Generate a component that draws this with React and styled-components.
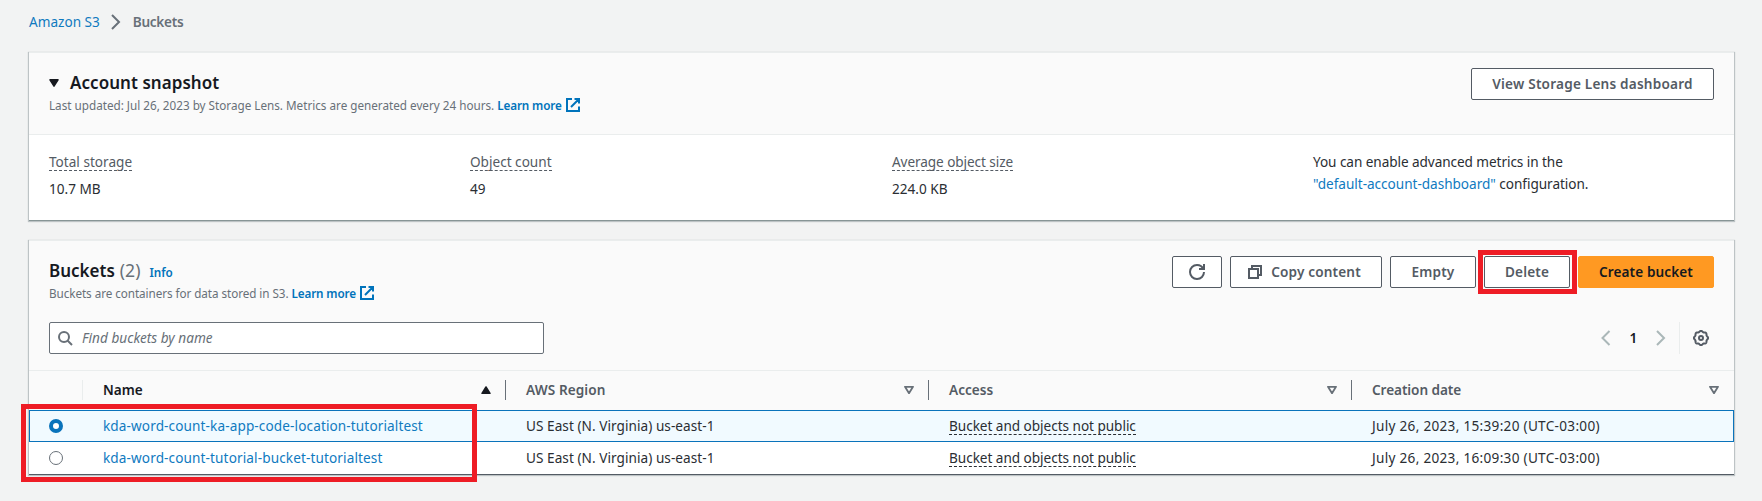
import React from 'react';
import styled, { createGlobalStyle, css } from 'styled-components';

const colors = {
  page: '#f2f3f3',
  header: '#fafafa',
  line: '#eaeded',
  text: '#16191f',
  body: '#2a2e33',
  muted: '#545b64',
  faint: '#687078',
  link: '#0073bb',
  linkLight: '#107abf',
  blue: '#0a73bb',
  mark: '#ee1c25',
};

const GlobalStyle = createGlobalStyle`
  *, *::before, *::after { box-sizing: border-box; }
  body {
    margin: 0;
    background: ${colors.page};
    color: ${colors.body};
    font: 13.6px/22px 'Noto Sans', 'Open Sans', sans-serif;
  }
`;

const Page = styled.div`
  min-height: 501px;
  padding: 11px 28px 0 29px;
`;

const Breadcrumbs = styled.nav`
  display: flex;
  align-items: center;
  height: 22px;
  margin-bottom: 19px;
  svg { margin: 0 9px 0 8px; }
`;

const Text = styled.span`
  white-space: nowrap;
  letter-spacing: ${(p) => p.$ls || 0}px;
  ${(p) => p.$color && css`color: ${p.$color};`}
  ${(p) => p.$bold && css`font-weight: 600;`}
`;

const Link = styled(Text).attrs({ as: 'a' })`
  color: ${(p) => (p.$bold ? colors.link : colors.linkLight)};
  text-decoration: none;
  cursor: pointer;
`;

const Panel = styled.section`
  width: 1705px;
  border-top: 1px solid ${colors.line};
  background: #fff;
  box-shadow: 0 1px 0 0 ${(p) => p.$edge}, 0 1px 1px 1px rgba(0, 28, 36, 0.22);
  & + & { margin-top: 20px; }
`;

const PanelHeader = styled.header`
  display: flex;
  justify-content: space-between;
  height: ${(p) => p.$height}px;
  padding: 15px 20px 0;
  background: ${colors.header};
`;

const Heading = styled.div`
  padding-top: 4px;
`;

const Title = styled.h2`
  display: flex;
  align-items: baseline;
  height: 22px;
  margin: 0 0 2px;
  font-size: 17px;
  font-weight: 600;
  line-height: 22px;
  color: ${colors.text};
`;

const Count = styled(Text)`
  margin-left: 5px;
  font-size: 17.6px;
  font-weight: 400;
  line-height: 20px;
  color: ${colors.faint};
`;

const InfoLink = styled(Link)`
  margin-left: 9px;
  font-size: 11.7px;
  line-height: 18px;
`;

const Description = styled.p`
  display: flex;
  align-items: center;
  margin: 0;
  height: 18px;
  font-size: 11.7px;
  line-height: 18px;
  color: ${colors.faint};
  a { margin-left: 3px; }
  svg { margin-left: 3px; }
`;

const Actions = styled.div`
  display: flex;
  align-items: flex-start;
  gap: 8px;
`;

const Button = styled.button`
  display: flex;
  align-items: center;
  justify-content: center;
  gap: 8px;
  width: ${(p) => p.$width}px;
  height: 32px;
  padding: 0 ${(p) => (p.$withIcon ? 4 : 0)}px 0 0;
  border: 1px solid ${(p) => (p.$primary ? '#ff9922' : colors.muted)};
  border-radius: 2px;
  background: ${(p) => (p.$primary ? '#ff9922' : '#fff')};
  color: ${(p) => (p.$primary ? colors.text : colors.muted)};
  font: 600 13.6px/22px 'Noto Sans', 'Open Sans', sans-serif;
`;

const Metrics = styled.div`
  display: grid;
  grid-template-columns: 421px 422px 421px 1fr;
  height: 86px;
  padding: 16px 20px 0;
  border-top: 1px solid ${colors.line};
`;

const Metric = styled.div`
  display: flex;
  flex-direction: column;
  align-items: flex-start;
  gap: 7px;
  padding-top: 2px;
`;

const Hint = styled.span`
  display: inline-block;
  height: 18px;
  border-bottom: 1px dashed currentColor;
  line-height: 17px;
  white-space: nowrap;
  letter-spacing: ${(p) => p.$ls || 0}px;
  color: ${(p) => p.$color || colors.body};
`;

const Toolbar = styled.div`
  display: flex;
  align-items: flex-start;
  justify-content: space-between;
  height: 48px;
  padding: 0 20px;
  background: ${colors.header};
`;

const SearchBox = styled.div`
  display: flex;
  align-items: center;
  gap: 9px;
  width: 495px;
  height: 32px;
  padding-left: 7px;
  border: 1px solid ${colors.faint};
  border-radius: 2px;
  background: #fff;
  font-style: italic;
`;

const Pager = styled.div`
  display: flex;
  align-items: center;
  height: 32px;
`;

const PageNumber = styled.span`
  width: 39px;
  text-align: center;
  font-weight: 600;
  color: ${colors.text};
`;

const Settings = styled.div`
  display: flex;
  align-items: center;
  height: 32px;
  margin-left: 10px;
  padding: 0 5px 0 13px;
  border-left: 1px solid ${colors.line};
`;

const rowGrid = css`
  display: grid;
  grid-template-columns: 54px 423px 423px 423px 382px;
  align-items: center;
`;

const HeaderRow = styled.div`
  ${rowGrid}
  height: 40px;
  padding-bottom: 1px;
  border-top: 1px solid ${colors.line};
  background: ${colors.header};
`;

const HeaderCell = styled.div`
  display: flex;
  align-items: center;
  justify-content: space-between;
  height: 20px;
  padding: 0 14px 0 20px;
  border-right: 1px solid ${(p) => (p.$last ? 'transparent' : p.$light ? colors.line : colors.faint)};
`;

const Rows = styled.div`
  position: relative;
`;

const Row = styled.div`
  ${rowGrid}
  height: 32px;
  ${(p) =>
    p.$selected &&
    css`
      background: #f1faff;
      box-shadow: inset 0 0 0 1px ${colors.blue};
    `}
`;

const Cell = styled.div`
  display: flex;
  align-items: center;
  padding-left: 20px;
`;

const Radio = styled.span`
  width: 14px;
  height: 14px;
  border-radius: 50%;
  border: ${(p) => (p.$checked ? `4px solid ${colors.blue}` : `1px solid ${colors.faint}`)};
  background: #fff;
`;

const Marked = styled.div`
  position: relative;
`;

const Mark = styled.div`
  position: absolute;
  z-index: 2;
  inset: ${(p) => p.$inset};
  width: ${(p) => (p.$width ? `${p.$width}px` : 'auto')};
  border: 5px solid ${colors.mark};
  pointer-events: none;
`;

const Svg = styled.svg`
  display: block;
  flex: none;
  fill: none;
  stroke: ${(p) => p.$color || colors.muted};
  stroke-width: 2;
`;

const Icon = ({ size = 16, color, children }) => (
  <Svg width={size} height={size} viewBox="0 0 16 16" $color={color}>
    {children}
  </Svg>
);

const ExternalIcon = () => (
  <Icon color={colors.link}>
    <path d="M7 2H2v12h12V9.5M9.5 2H14v4.5M6 10l8-8" />
  </Icon>
);

const RefreshIcon = () => (
  <Icon>
    <path d="M10 5h5V0" />
    <path d="M15 8a6.957 6.957 0 0 1-7 7 6.957 6.957 0 0 1-7-7 6.957 6.957 0 0 1 7-7 6.87 6.87 0 0 1 6.3 4" />
  </Icon>
);

const CopyIcon = () => (
  <Icon>
    <path d="M2 5h9v9H2zM5 5V2h9v9h-3" />
  </Icon>
);

const SearchIcon = () => (
  <Icon color={colors.faint}>
    <circle cx="7" cy="7" r="5" />
    <path d="M15 15l-4.5-4.5" />
  </Icon>
);

const Chevron = ({ left, color }) => (
  <Icon color={color}>
    <path d={left ? 'M11.500 1 4.500 8l7 7' : 'M4 1l7 7-7 7'} />
  </Icon>
);

const gearOutline = Array.from({ length: 96 }, (_, i) => {
  const a = (i / 96) * Math.PI * 2;
  const r = 6.6 + 0.5 * Math.cos(a * 8);
  return `${i ? 'L' : 'M'}${(8 + r * Math.cos(a)).toFixed(2)} ${(8 + r * Math.sin(a)).toFixed(2)}`;
}).join('');

const GearIcon = () => (
  <Icon>
    <path d={`${gearOutline}Z`} />
    <circle cx="8" cy="8" r="2" />
  </Icon>
);

const Triangle = ({ up, open }) => (
  <Svg
    width="10"
    height="8"
    viewBox="0 0 10 8"
    $color={open ? colors.faint : colors.text}
  >
    <path
      d={up ? 'M5 1 9 7.300H1z' : 'M1 .8h8L5 7.200z'}
      fill={open ? 'none' : colors.text}
      strokeWidth={open ? 1.8 : 1.5}
      strokeLinejoin="round"
    />
  </Svg>
);

const TitleCaret = styled.span`
  width: 21px;
  align-self: center;
`;

const metrics = [
  { label: 'Total storage', value: '10.7 MB', ls: 0 },
  { label: 'Object count', value: '49', ls: 0 },
  { label: 'Average object size', value: '224.0 KB', ls: -0.08 },
];

const columns = [
  { label: 'Name', sorted: true },
  { label: 'AWS Region', ls: 0.08 },
  { label: 'Access' },
  { label: 'Creation date', ls: -0.08 },
];

const buckets = [
  { name: 'kda-word-count-ka-app-code-location-tutorialtest', date: 'July 26, 2023, 15:39:20 (UTC-03:00)', selected: true },
  { name: 'kda-word-count-tutorial-bucket-tutorialtest', date: 'July 26, 2023, 16:09:30 (UTC-03:00)' },
];

const LearnMore = () => (
  <>
    <Link $bold $ls={-0.13}>Learn more</Link>
    <ExternalIcon />
  </>
);

export default function App() {
  return (
    <Page>
      <GlobalStyle />
      <Breadcrumbs>
        <Link>Amazon S3</Link>
        <Chevron color={colors.faint} />
        <Text $bold $color={colors.faint} $ls={-0.3}>Buckets</Text>
      </Breadcrumbs>

      <Panel $edge="#879596">
        <PanelHeader $height={81}>
          <Heading>
            <Title>
              <TitleCaret><Triangle /></TitleCaret>
              <Text $ls={0.05}>Account snapshot</Text>
            </Title>
            <Description>
              <Text>Last updated: Jul 26, 2023 by Storage Lens. Metrics are generated every 24 hours.</Text>
              <LearnMore />
            </Description>
          </Heading>
          <Actions>
            <Button $width={243}><Text $ls={0.2}>View Storage Lens dashboard</Text></Button>
          </Actions>
        </PanelHeader>
        <Metrics>
          {metrics.map((m) => (
            <Metric key={m.label}>
              <Hint $color={colors.muted} $ls={m.ls}>{m.label}</Hint>
              <Text>{m.value}</Text>
            </Metric>
          ))}
          <div>
            <Text $ls={-0.07}>You can enable advanced metrics in the</Text>
            <br />
            <Link $ls={-0.03}>"default-account-dashboard"</Link> <Text $ls={-0.05}>configuration.</Text>
          </div>
        </Metrics>
      </Panel>

      <Panel $edge="#545b64">
        <PanelHeader $height={81}>
          <Heading>
            <Title>
              <Text>Buckets</Text>
              <Count>(2)</Count>
              <InfoLink $bold>Info</InfoLink>
            </Title>
            <Description>
              <Text $ls={-0.06}>Buckets are containers for data stored in S3.</Text>
              <LearnMore />
            </Description>
          </Heading>
          <Actions>
            <Button $width={50} aria-label="Refresh"><RefreshIcon /></Button>
            <Button $width={152} $withIcon><CopyIcon /><Text $ls={0.15}>Copy content</Text></Button>
            <Button $width={86}><Text $ls={0.15}>Empty</Text></Button>
            <Marked>
              <Button $width={86}><Text $ls={0.15}>Delete</Text></Button>
              <Mark $inset="-6px -7px -6px -6px" />
            </Marked>
            <Button $width={136} $primary><Text $ls={0.1}>Create bucket</Text></Button>
          </Actions>
        </PanelHeader>
        <Toolbar>
          <SearchBox>
            <SearchIcon />
            <Text $color={colors.faint} $ls={0.03}>Find buckets by name</Text>
          </SearchBox>
          <Pager>
            <Chevron left color="#aab7b8" />
            <PageNumber>1</PageNumber>
            <Chevron color="#aab7b8" />
            <Settings><GearIcon /></Settings>
          </Pager>
        </Toolbar>
        <HeaderRow>
          <HeaderCell $light />
          {columns.map((c, i) => (
            <HeaderCell key={c.label} $last={i === columns.length - 1}>
              <Text $bold $ls={c.ls} $color={c.sorted ? colors.text : colors.muted}>{c.label}</Text>
              <Triangle up={c.sorted} open={!c.sorted} />
            </HeaderCell>
          ))}
        </HeaderRow>
        <Rows>
          {buckets.map((b) => (
            <Row key={b.name} $selected={b.selected}>
              <Cell><Radio $checked={b.selected} /></Cell>
              <Cell><Link $ls={0.11}>{b.name}</Link></Cell>
              <Cell><Text $ls={0.05}>US East (N. Virginia) us-east-1</Text></Cell>
              <Cell><Hint $ls={-0.04}>Bucket and objects not public</Hint></Cell>
              <Cell><Text $ls={0.29}>{b.date}</Text></Cell>
            </Row>
          ))}
          <Mark $inset="-6px auto -8px -8px" $width={456} />
        </Rows>
      </Panel>
    </Page>
  );
}
